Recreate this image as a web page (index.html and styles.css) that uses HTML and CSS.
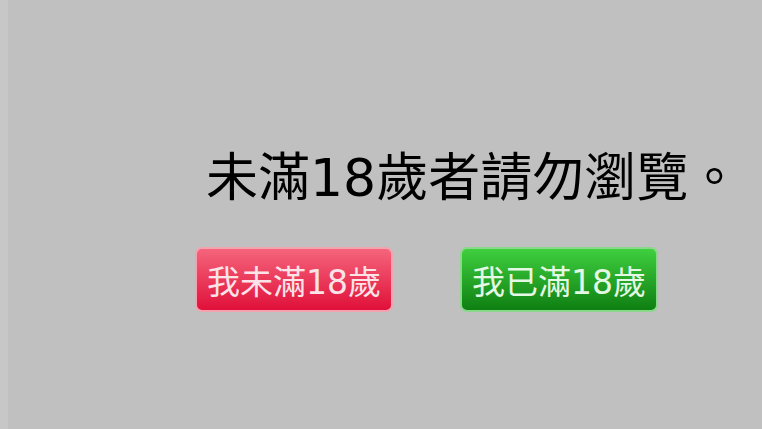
FILE: index.html
```html
<!DOCTYPE html>
<html lang="zh-Hant">
<head>
<meta charset="utf-8">
<title>年齡確認</title>
<link rel="stylesheet" href="styles.css">
</head>
<body>
<div class="page">
  <div class="notice">
    <h1 class="title">未滿18歲者請勿瀏覽。</h1>
    <div class="actions">
      <a class="btn btn-red" href="#">我未滿18歲</a>
      <a class="btn btn-green" href="#">我已滿18歲</a>
    </div>
  </div>
</div>
</body>
</html>
```

FILE: styles.css
```css
html, body {
  margin: 0;
  padding: 0;
  height: 100%;
}
body {
  background: #c0c0c0;
  font-family: "DejaVu Sans", "Noto Sans CJK TC", sans-serif;
}
.page {
  height: 100%;
  border-left: 8px solid #c7c7c7;
  box-sizing: border-box;
  padding-top: 152px;
}
.notice {
  display: flex;
  flex-direction: column;
}
.title {
  margin: 0 0 0 198px;
  font-size: 52px;
  font-weight: normal;
  line-height: 1;
  color: #000;
  white-space: nowrap;
}
.actions {
  display: flex;
  gap: 67px;
  margin: 43px 0 0 187px;
}
.btn {
  width: 198px;
  height: 65px;
  box-sizing: border-box;
  display: flex;
  align-items: center;
  justify-content: center;
  border-radius: 7px;
  font-size: 33px;
  text-decoration: none;
}
.btn-red {
  color: #fbe3e8;
  border: 2px solid #f3a2b0;
  background: linear-gradient(#f5657c, #e0103a);
}
.btn-green {
  color: #e4f8e4;
  border: 2px solid #8ad88a;
  background: linear-gradient(#3fcf3f, #0f7f12);
}
```
